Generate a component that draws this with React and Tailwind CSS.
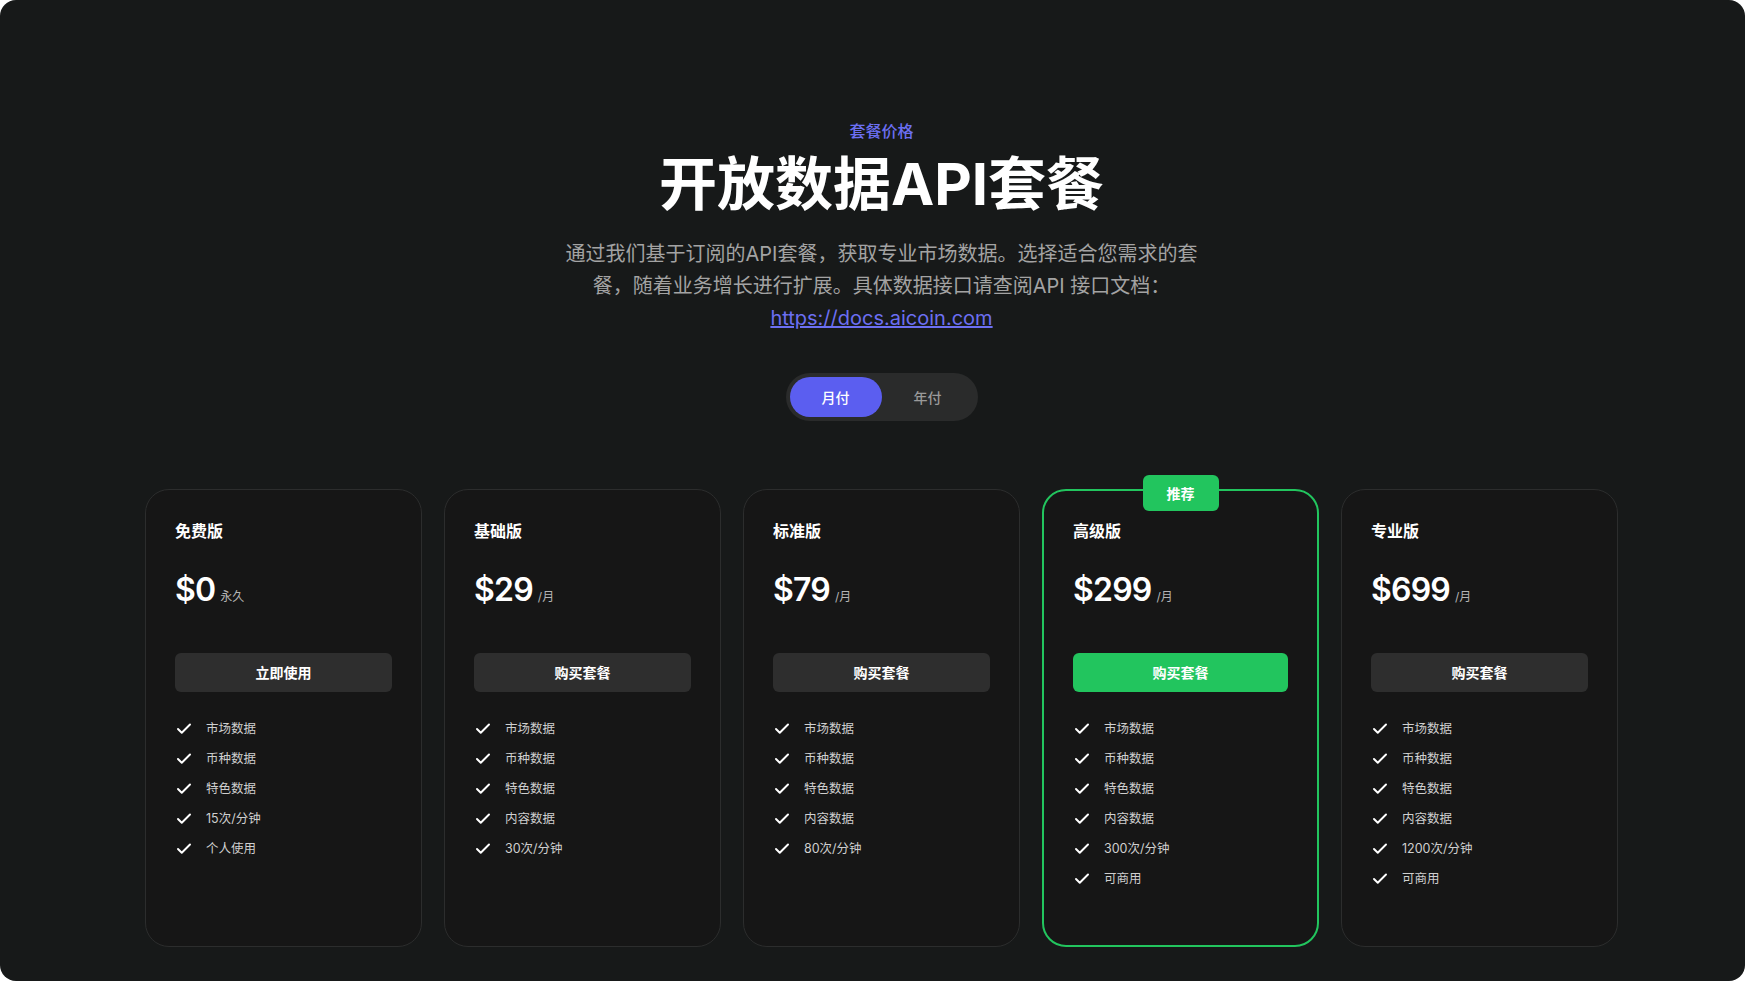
import { useState } from 'react'
import { Check } from 'lucide-react'

const plans = [
  {
    name: '免费版',
    price: '$0',
    unit: '永久',
    cta: '立即使用',
    features: ['市场数据', '币种数据', '特色数据', '15次/分钟', '个人使用'],
  },
  {
    name: '基础版',
    price: '$29',
    unit: '/月',
    cta: '购买套餐',
    features: ['市场数据', '币种数据', '特色数据', '内容数据', '30次/分钟'],
  },
  {
    name: '标准版',
    price: '$79',
    unit: '/月',
    cta: '购买套餐',
    features: ['市场数据', '币种数据', '特色数据', '内容数据', '80次/分钟'],
  },
  {
    name: '高级版',
    price: '$299',
    unit: '/月',
    cta: '购买套餐',
    featured: true,
    features: ['市场数据', '币种数据', '特色数据', '内容数据', '300次/分钟', '可商用'],
  },
  {
    name: '专业版',
    price: '$699',
    unit: '/月',
    cta: '购买套餐',
    features: ['市场数据', '币种数据', '特色数据', '内容数据', '1200次/分钟', '可商用'],
  },
]

function PlanCard({ plan }) {
  return (
    <div
      className={
        plan.featured
          ? 'relative h-[458px] rounded-3xl border-2 border-[#22c55e] bg-[#161616] px-[29px] pt-[28px]'
          : 'relative h-[458px] rounded-3xl border border-[#2c2d2d] bg-[#161616] px-[29px] pt-[29px]'
      }
    >
      {plan.featured && (
        <div className="absolute left-1/2 top-[-16px] flex h-[36px] w-[76px] -translate-x-1/2 items-center justify-center rounded-md bg-[#22c55e] text-[14px] font-semibold text-white">
          推荐
        </div>
      )}
      <h3 className="text-[16px] font-semibold leading-6 text-white">{plan.name}</h3>
      <div className="mt-[25px] flex h-[44px] items-baseline">
        <span className="text-[32px] font-semibold leading-[44px] tracking-tight text-white">{plan.price}</span>
        <span className="ml-[5px] text-[12px] text-[#b4b4b4]">{plan.unit}</span>
      </div>
      <button
        className={
          plan.featured
            ? 'mt-[41px] h-[39px] w-full rounded-md bg-[#22c55e] text-[14px] font-semibold text-white'
            : 'mt-[41px] h-[39px] w-full rounded-md bg-[#2e2e2e] text-[14px] font-semibold text-white'
        }
      >
        {plan.cta}
      </button>
      <ul className="mt-[22px]">
        {plan.features.map((f) => (
          <li key={f} className="flex h-[30px] items-center gap-[13px] text-[12.5px] text-[#cfcfcf]">
            <Check size={18} strokeWidth={2.6} className="text-white" />
            <span>{f}</span>
          </li>
        ))}
      </ul>
    </div>
  )
}

export default function App() {
  const [billing, setBilling] = useState('monthly')

  return (
    <div
      className="h-[981px] w-full bg-white"
      style={{ fontFamily: 'Inter, "Noto Sans CJK SC", sans-serif' }}
    >
      <div className="flex h-full flex-col items-center rounded-[16px] bg-[#171919] pl-[18px] pt-[121px]">
        <p className="text-[16px] font-medium leading-5 text-[#6c6ff2]">套餐价格</p>
        <h1 className="mt-[13px] text-[58px] font-bold leading-[60px] text-white">开放数据API套餐</h1>
        <p className="mt-[24px] max-w-[640px] text-center text-[20px] leading-[32px] text-[#a3a3a3]">
          通过我们基于订阅的API套餐，获取专业市场数据。选择适合您需求的套餐，随着业务增长进行扩展。具体数据接口请查阅API 接口文档：
          <a href="#" className="text-[#6c6ff2] underline">https://docs.aicoin.com</a>
        </p>

        <div className="mt-[39px] flex rounded-full bg-[#2a2b2b] p-[4px]">
          <button
            onClick={() => setBilling('monthly')}
            className={
              billing === 'monthly'
                ? 'h-[40px] w-[92px] rounded-full bg-[#5b5ef0] text-[14px] font-medium text-white'
                : 'h-[40px] w-[92px] rounded-full text-[14px] font-medium text-[#9a9a9a]'
            }
          >
            月付
          </button>
          <button
            onClick={() => setBilling('yearly')}
            className={
              billing === 'yearly'
                ? 'h-[40px] w-[92px] rounded-full bg-[#5b5ef0] text-[14px] font-medium text-white'
                : 'h-[40px] w-[92px] rounded-full text-[14px] font-medium text-[#9a9a9a]'
            }
          >
            年付
          </button>
        </div>

        <div className="mt-[68px] grid w-[1473px] grid-cols-5 gap-[22px]">
          {plans.map((p) => (
            <PlanCard key={p.name} plan={p} />
          ))}
        </div>
      </div>
    </div>
  )
}
